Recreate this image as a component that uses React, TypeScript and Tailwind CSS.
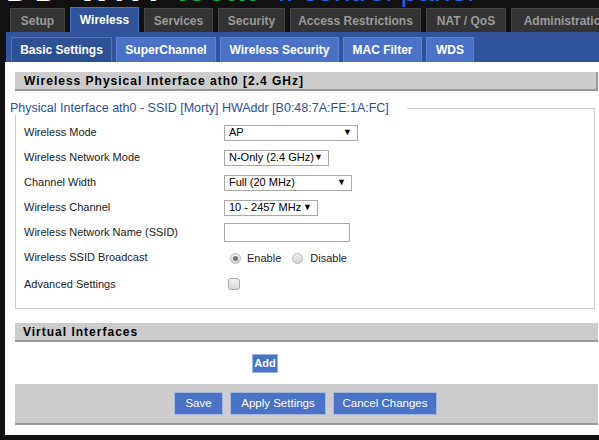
import React from "react";

const mainTabs = [
  { label: "Setup", w: 55 },
  { label: "Wireless", w: 69, active: true },
  { label: "Services", w: 69 },
  { label: "Security", w: 67 },
  { label: "Access Restrictions", w: 131 },
  { label: "NAT / QoS", w: 80 },
  { label: "Administration", w: 110 },
];

const subTabs = [
  { label: "Basic Settings", w: 101, active: true },
  { label: "SuperChannel", w: 100 },
  { label: "Wireless Security", w: 119 },
  { label: "MAC Filter", w: 79 },
  { label: "WDS", w: 48 },
];

function Select({ value, w }: { value: string; w: number }) {
  return (
    <div
      className="h-[16px] border border-[#a9a9a9] bg-white flex items-center justify-between pl-[4px] pr-[5px] text-[11px] text-black leading-none"
      style={{ width: w }}
    >
      <span>{value}</span>
      <span className="text-[9px]">▼</span>
    </div>
  );
}

function Radio({ checked }: { checked?: boolean }) {
  return (
    <span className="w-[11px] h-[11px] rounded-full border border-[#b5b5b5] bg-gradient-to-b from-[#f0f0f0] to-[#d4d4d4] flex items-center justify-center">
      {checked && <span className="w-[5px] h-[5px] rounded-full bg-[#777]" />}
    </span>
  );
}

export default function App() {
  return (
    <div className="w-[599px] h-[440px] overflow-hidden bg-[#111111] font-['Liberation_Sans',Arial,sans-serif]">
      {/* logo remnant */}
      <div className="h-[7px] overflow-hidden">
        <div className="-mt-[28px] pl-[6px] flex items-baseline gap-[10px] text-[34px] font-bold leading-none whitespace-nowrap">
          <span className="text-white tracking-[4px]">DD-WRT</span>
          <span className="text-[#1fa552]">.com</span>
          <span className="text-[#2b5fe0] font-normal text-[30px] ml-[10px]">:: control panel</span>
        </div>
      </div>
      {/* main tabs */}
      <div className="h-[25px] flex items-end pl-[10px] gap-[5px]">
        {mainTabs.map((t) =>
          t.active ? (
            <div
              key={t.label}
              className="h-[25px] shrink-0 bg-[#30539b] border-t border-l border-r border-[#4a70c0] flex items-center justify-center text-white text-[12px] font-bold"
              style={{ width: t.w }}
            >
              {t.label}
            </div>
          ) : (
            <div
              key={t.label}
              className="h-[24px] shrink-0 bg-[#333333] border-t border-l border-r border-[#444444] flex items-center justify-center text-[#9a9a9a] text-[12px] font-bold whitespace-nowrap"
              style={{ width: t.w }}
            >
              {t.label}
            </div>
          )
        )}
      </div>
      {/* sub tabs */}
      <div className="ml-[6px] h-[30px] bg-[#30539b] flex items-end pl-[5px] gap-[4px]">
        {subTabs.map((t) => (
          <div
            key={t.label}
            className={
              t.active
                ? "h-[25px] shrink-0 bg-[#2e5196] border-t border-l border-r border-[#4d72c4] flex items-center justify-center text-white text-[12px] font-bold"
                : "h-[25px] shrink-0 bg-[#4a72c7] border-t border-l border-r border-[#5b82d6] flex items-center justify-center text-white text-[12px] font-bold"
            }
            style={{ width: t.w }}
          >
            {t.label}
          </div>
        ))}
      </div>
      {/* content */}
      <div className="ml-[5px] h-[373px] bg-white pt-[10px] pl-[10px] pr-[1px]">
        <div className="h-[19px] bg-[#cccccc] border-b-2 border-r-2 border-[#999999] flex items-center pl-[9px] text-[12px] font-bold tracking-[1px] text-black">
          Wireless Physical Interface ath0 [2.4 GHz]
        </div>
        <fieldset className="mt-[10px] mr-[3px] border border-[#cccccc] pl-[8px] pb-[11px]">
          <legend className="-ml-[14px] pr-[18px] text-[12.5px] text-[#2d4f9e] leading-[14px]">
            Physical Interface ath0 - SSID [Morty] HWAddr [B0:48:7A:FE:1A:FC]
          </legend>
          <div className="pt-[5px] text-[11px] text-[#222]">
            <div className="h-[25px] flex items-center">
              <div className="w-[200px]">Wireless Mode</div>
              <Select value="AP" w={134} />
            </div>
            <div className="h-[25px] flex items-center">
              <div className="w-[200px]">Wireless Network Mode</div>
              <Select value="N-Only (2.4 GHz)" w={105} />
            </div>
            <div className="h-[25px] flex items-center">
              <div className="w-[200px]">Channel Width</div>
              <Select value="Full (20 MHz)" w={128} />
            </div>
            <div className="h-[25px] flex items-center">
              <div className="w-[200px]">Wireless Channel</div>
              <Select value="10 - 2457 MHz" w={94} />
            </div>
            <div className="h-[25px] flex items-center">
              <div className="w-[200px]">Wireless Network Name (SSID)</div>
              <div className="w-[126px] h-[19px] border border-[#a9a9a9] bg-white" />
            </div>
            <div className="h-[25px] flex items-center">
              <div className="w-[200px]">Wireless SSID Broadcast</div>
              <div className="flex items-center pl-[6px] pt-[2px]">
                <Radio checked />
                <span className="ml-[6px] text-[11px]">Enable</span>
                <span className="ml-[11px]"><Radio /></span>
                <span className="ml-[7px] text-[11px]">Disable</span>
              </div>
            </div>
            <div className="h-[27px] flex items-center pt-[1px]">
              <div className="w-[200px]">Advanced Settings</div>
              <span className="ml-[4px] w-[12px] h-[12px] rounded-[3px] border border-[#a9a9a9] bg-gradient-to-b from-[#f2f2f2] to-[#d8d8d8]" />
            </div>
          </div>
        </fieldset>
        <div className="mt-[14px] h-[19px] bg-[#cccccc] border-b-2 border-[#999999] flex items-center pl-[8px] text-[12px] font-bold tracking-[1px] text-black">
          Virtual Interfaces
        </div>
        <div className="h-[42px] flex items-center pl-[237px]">
          <div className="w-[26px] h-[19px] bg-[#4a72c7] border border-[#9fb3df] flex items-center justify-center text-white text-[11px] font-bold">
            Add
          </div>
        </div>
        <div className="h-[41px] bg-[#cccccc] border-b-2 border-[#999999] flex items-center justify-center gap-[7px] pr-[2px]">
          <div className="w-[49px] h-[23px] bg-[#4a72c7] border border-[#a4b6de] flex items-center justify-center text-white text-[11.5px]">
            Save
          </div>
          <div className="w-[96px] h-[23px] bg-[#4a72c7] border border-[#a4b6de] flex items-center justify-center text-white text-[11.5px]">
            Apply Settings
          </div>
          <div className="w-[104px] h-[23px] bg-[#4a72c7] border border-[#a4b6de] flex items-center justify-center text-white text-[11.5px]">
            Cancel Changes
          </div>
        </div>
      </div>
    </div>
  );
}
